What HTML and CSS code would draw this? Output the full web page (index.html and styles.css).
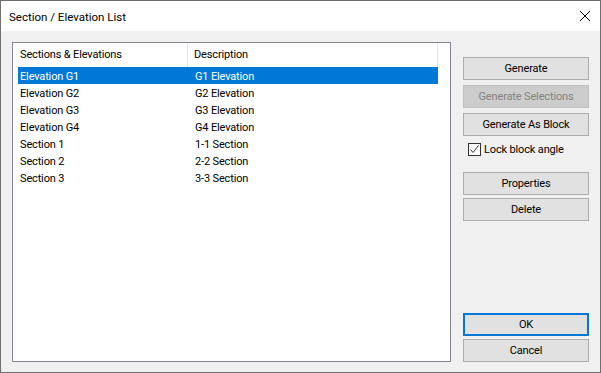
FILE: index.html
```html
<!DOCTYPE html>
<html lang="en">
<head>
    <meta charset="UTF-8">
    <title>Section / Elevation List</title>
    <link rel="stylesheet" href="styles.css">
</head>
<body>

<div class="dialog">
    <div class="titlebar">
        <span class="title">Section / Elevation List</span>
        <svg class="close" width="10" height="10" viewBox="0 0 10 10">
            <path d="M0 0 L10 10 M10 0 L0 10" stroke="#000" stroke-width="1" fill="none"/>
        </svg>
    </div>

    <div class="content">
        <div class="listview">
            <div class="list-head">
                <div class="col col-name">Sections &amp; Elevations</div>
                <div class="col col-desc">Description</div>
            </div>
            <div class="list-row selected">
                <div class="col col-name">Elevation G1</div>
                <div class="col col-desc">G1 Elevation</div>
            </div>
            <div class="list-row">
                <div class="col col-name">Elevation G2</div>
                <div class="col col-desc">G2 Elevation</div>
            </div>
            <div class="list-row">
                <div class="col col-name">Elevation G3</div>
                <div class="col col-desc">G3 Elevation</div>
            </div>
            <div class="list-row">
                <div class="col col-name">Elevation G4</div>
                <div class="col col-desc">G4 Elevation</div>
            </div>
            <div class="list-row">
                <div class="col col-name">Section 1</div>
                <div class="col col-desc">1-1 Section</div>
            </div>
            <div class="list-row">
                <div class="col col-name">Section 2</div>
                <div class="col col-desc">2-2 Section</div>
            </div>
            <div class="list-row">
                <div class="col col-name">Section 3</div>
                <div class="col col-desc">3-3 Section</div>
            </div>
        </div>

        <div class="side">
            <div class="group">
                <button class="btn">Generate</button>
                <button class="btn" disabled>Generate Selections</button>
                <button class="btn">Generate As Block</button>
            </div>
            <label class="check">
                <span class="box">
                    <svg width="11" height="11" viewBox="0 0 11 11">
                        <path d="M1.5 5.5 L4 8.5 L9.5 1.5" stroke="#333" stroke-width="1" fill="none"/>
                    </svg>
                </span>
                Lock block angle
            </label>
            <div class="group tight">
                <button class="btn">Properties</button>
                <button class="btn">Delete</button>
            </div>

            <div class="spacer"></div>

            <div class="group tight">
                <button class="btn default">OK</button>
                <button class="btn">Cancel</button>
            </div>
        </div>
    </div>
</div>

</body>
</html>
```

FILE: styles.css
```css
body {
    margin: 0;
    font-family: Roboto, Arial, sans-serif;
    font-size: 11px;
    letter-spacing: -0.15px;
    color: #000;
    background: #fff;
}
.dialog {
    width: 601px;
    height: 373px;
    box-sizing: border-box;
    border: 1px solid #6f6f6f;
    display: flex;
    flex-direction: column;
}
.titlebar {
    height: 30px;
    background: #fff;
    display: flex;
    align-items: center;
    justify-content: space-between;
    padding: 0 10px 0 8px;
    flex-shrink: 0;
}
.title {
    font-size: 11.5px;
    letter-spacing: 0;
    padding-top: 1px;
}
.content {
    flex: 1;
    background: #f0f0f0;
    display: flex;
    padding: 11px 11px 10px 11px;
    gap: 12px;
}
.listview {
    width: 439px;
    box-sizing: border-box;
    border: 1px solid #828790;
    background: #fff;
    padding: 0 12px 0 5px;
}
.list-head,
.list-row {
    display: flex;
    height: 17px;
    line-height: 17px;
    padding-top: 1px;
    box-sizing: border-box;
}
.list-head {
    height: 24px;
    line-height: 24px;
    padding-top: 0;
}
.col {
    white-space: nowrap;
    overflow: hidden;
}
.col-name {
    width: 170px;
    padding-left: 2px;
    box-sizing: border-box;
}
.col-desc {
    width: 250px;
    padding-left: 7px;
    box-sizing: border-box;
}
.list-head .col-name {
    border-right: 1px solid #e5e5e5;
}
.list-head .col-desc {
    padding-left: 6px;
    border-right: 1px solid #e5e5e5;
}
.list-row.selected {
    background: #0078d7;
    color: #fff;
}
.side {
    flex: 1;
    display: flex;
    flex-direction: column;
    padding-top: 15px;
}
.group {
    display: flex;
    flex-direction: column;
    gap: 5px;
}
.group.tight {
    gap: 3px;
}
.btn {
    height: 23px;
    width: 126px;
    font-family: inherit;
    font-size: inherit;
    letter-spacing: inherit;
    background: #e1e1e1;
    border: 1px solid #adadad;
    color: #000;
    padding: 0;
}
.btn:disabled {
    background: #cccccc;
    border-color: #bfbfbf;
    color: #838383;
}
.btn.default {
    border: 2px solid #0078d7;
}
.check {
    display: flex;
    align-items: center;
    gap: 3px;
    height: 16px;
    margin: 5px 0 15px;
    padding-left: 5px;
}
.box {
    width: 13px;
    height: 13px;
    box-sizing: border-box;
    border: 1px solid #333;
    background: #fff;
    display: flex;
    align-items: center;
    justify-content: center;
}
.spacer {
    flex: 1;
}
```
